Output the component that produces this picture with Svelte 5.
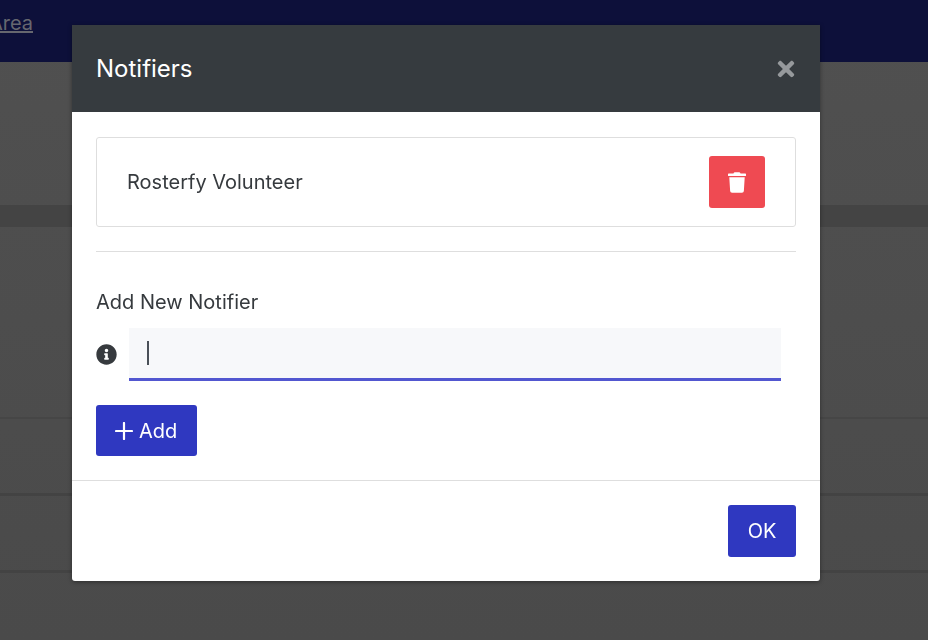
<script>
  let name = '';
</script>

<div class="page">
  <header class="topbar"><a class="area" href="#area">Area</a></header>
  <div class="intro"></div>
  <div class="band"></div>
  <div class="row first"></div>
  <div class="row second"></div>
  <div class="row third"></div>
</div>

<div class="modal">
  <div class="modal-head">
    <h2>Notifiers</h2>
    <svg class="close" viewBox="0 0 352 512" width="18" height="24" aria-label="Close">
      <path fill="currentColor" d="M242.72 256l100.07-100.07c12.28-12.28 12.28-32.19 0-44.48l-22.24-22.24c-12.28-12.28-32.19-12.28-44.48 0L176 189.28 75.93 89.21c-12.28-12.28-32.19-12.28-44.48 0L9.21 111.45c-12.28 12.28-12.28 32.19 0 44.48L109.28 256 9.21 356.07c-12.28 12.28-12.28 32.19 0 44.48l22.24 22.24c12.28 12.28 32.2 12.28 44.48 0L176 322.72l100.07 100.07c12.28 12.28 32.2 12.28 44.48 0l22.24-22.24c12.28-12.28 12.28-32.19 0-44.48L242.72 256z"/>
    </svg>
  </div>

  <div class="modal-body">
    <div class="notifier">
      <span>Rosterfy Volunteer</span>
      <button class="delete" aria-label="Delete">
        <svg viewBox="0 0 448 512" width="18" height="21">
          <path fill="currentColor" d="M432 32H312l-9.4-18.7A24 24 0 0 0 281.1 0H166.8a23.72 23.72 0 0 0-21.4 13.3L136 32H16A16 16 0 0 0 0 48v32a16 16 0 0 0 16 16h416a16 16 0 0 0 16-16V48a16 16 0 0 0-16-16zM53.2 467a48 48 0 0 0 47.9 45h245.8a48 48 0 0 0 47.9-45L416 128H32z"/>
        </svg>
      </button>
    </div>

    <hr />

    <label for="notifier-name">Add New Notifier</label>
    <div class="field">
      <svg class="info" viewBox="0 0 512 512" width="21" height="21">
        <path fill="currentColor" d="M256 8C119 8 8 119.1 8 256c0 137 111 248 248 248s248-111 248-248C504 119.1 393 8 256 8zm0 110c23.2 0 42 18.8 42 42s-18.8 42-42 42-42-18.8-42-42 18.8-42 42-42zm56 254c0 6.6-5.4 12-12 12h-88c-6.6 0-12-5.4-12-12v-24c0-6.6 5.4-12 12-12h12v-64h-12c-6.6 0-12-5.4-12-12v-24c0-6.6 5.4-12 12-12h64c6.6 0 12 5.4 12 12v100h12c6.6 0 12 5.4 12 12v24z"/>
      </svg>
      <div class="input-wrap">
        <input id="notifier-name" bind:value={name} />
        <span class="caret"></span>
      </div>
    </div>

    <button class="primary add">
      <svg viewBox="0 0 18 18" width="18" height="18">
        <path d="M9 1v16M1 9h16" stroke="currentColor" stroke-width="2.2" stroke-linecap="round" fill="none"/>
      </svg>
      Add
    </button>
  </div>

  <div class="modal-foot">
    <button class="primary ok">OK</button>
  </div>
</div>

<style>
  :global(body) {
    margin: 0;
    background: #4d4d4d;
    overflow: hidden;
  }

  .page {
    height: 640px;
    background: linear-gradient(#505050, #4a4a4a);
    font-family: Inter, "Liberation Sans", sans-serif;
  }

  .topbar {
    height: 62px;
    background: #0d103a;
    padding-left: 0;
    overflow: hidden;
    position: relative;
  }

  .area {
    display: block;
    width: 33px;
    margin-top: 10px;
    direction: rtl;
    overflow: hidden;
    color: #66676f;
    font-size: 20px;
    line-height: 26px;
    white-space: nowrap;
  }

  .intro {
    height: 143px;
  }

  .band {
    height: 22px;
    background: #444;
  }

  .row.first {
    height: 190px;
    border-bottom: 2px solid #464646;
  }

  .row.second {
    height: 74px;
    border-bottom: 3px solid #434343;
  }

  .row.third {
    height: 74px;
    border-bottom: 3px solid #434343;
  }

  .modal {
    position: fixed;
    left: 72px;
    top: 25px;
    width: 748px;
    height: 556px;
    display: flex;
    flex-direction: column;
    background: #fff;
    border-radius: 0 0 3px 3px;
    box-shadow: 0 1px 4px rgba(0, 0, 0, 0.4);
    color: #363a3e;
    font-family: Inter, "Liberation Sans", sans-serif;
    overflow: hidden;
  }

  .modal-head {
    height: 87px;
    box-sizing: border-box;
    display: flex;
    align-items: center;
    justify-content: space-between;
    padding: 0 25px 0 24px;
    background: #363b3f;
    color: #fff;
  }

  h2 {
    margin: 0;
    font-size: 24px;
    font-weight: 400;
  }

  .close {
    color: #96999c;
  }

  .modal-body {
    flex: 1;
    padding: 25px 24px 0;
  }

  .notifier {
    height: 90px;
    box-sizing: border-box;
    display: flex;
    align-items: center;
    justify-content: space-between;
    padding: 0 30px;
    border: 1px solid #dedede;
    border-radius: 3px;
    font-size: 20px;
  }

  .delete {
    width: 56px;
    height: 52px;
    display: flex;
    align-items: center;
    justify-content: center;
    padding: 0;
    border: 0;
    border-radius: 3px;
    background: #ef4a52;
    color: #fff;
  }

  hr {
    margin: 24px 0 0;
    border: 0;
    border-top: 1px solid #dedede;
  }

  label {
    display: block;
    margin-top: 38px;
    font-size: 20px;
    line-height: 24px;
  }

  .field {
    display: flex;
    align-items: center;
    gap: 12px;
    margin-top: 14px;
    padding-right: 15px;
  }

  .info {
    flex: none;
    color: #363a3e;
  }

  .input-wrap {
    position: relative;
    flex: 1;
  }

  input {
    display: block;
    width: 100%;
    height: 53px;
    box-sizing: border-box;
    border: 0;
    border-bottom: 3px solid #5257d0;
    background: #f7f8fa;
    outline: 0;
  }

  .caret {
    position: absolute;
    left: 18px;
    top: 13px;
    width: 2px;
    height: 24px;
    background: #4a5058;
  }

  .primary {
    border: 0;
    border-radius: 3px;
    background: #2f38c0;
    color: #fff;
    font-family: inherit;
    font-size: 20px;
  }

  .add {
    display: flex;
    align-items: center;
    gap: 6px;
    width: 101px;
    height: 51px;
    margin-top: 24px;
    padding: 0 0 0 19px;
  }

  .modal-foot {
    height: 101px;
    box-sizing: border-box;
    display: flex;
    justify-content: flex-end;
    padding: 24px;
    border-top: 1px solid #dedede;
  }

  .ok {
    width: 68px;
    height: 52px;
    padding: 0;
  }
</style>
